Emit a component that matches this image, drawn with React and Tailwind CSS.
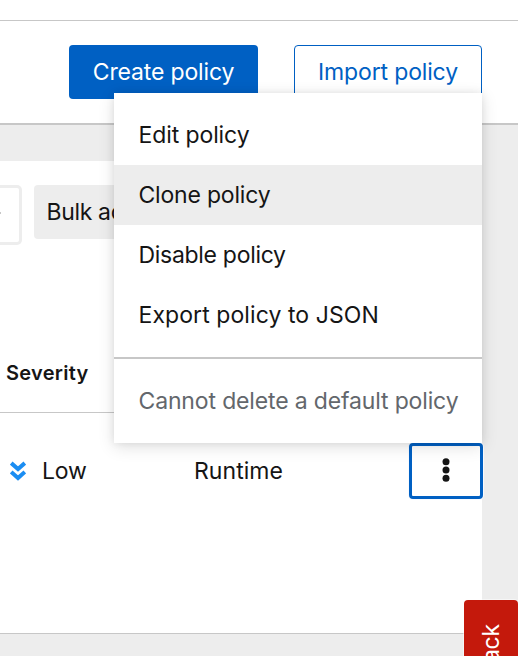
import React from "react";

const menuItems = [
  { label: "Edit policy", spacing: "tracking-[-0.1px]" },
  { label: "Clone policy", active: true, spacing: "tracking-[-0.2px]" },
  { label: "Disable policy", spacing: "tracking-[-0.3px]" },
  { label: "Export policy to JSON", spacing: "tracking-[0.08px]" },
];

function SeverityLowIcon() {
  return (
    <svg width="16" height="20" viewBox="0 0 16 20" fill="none" stroke="#1b8df2" strokeWidth="4" className="shrink-0">
      <path d="M1.2 2.1 8 8.1 14.8 2.1M1.2 11 8 17 14.8 11" strokeLinejoin="miter" />
    </svg>
  );
}

function ActionsMenu() {
  return (
    <div className="absolute left-[114px] top-[93px] z-20 h-[350px] w-[368px] bg-white py-3 shadow-[0_4px_16px_rgba(3,3,3,0.12),0_0_8px_rgba(3,3,3,0.08)]">
      {menuItems.map((item) => (
        <div
          key={item.label}
          className={`flex h-[60px] items-center whitespace-nowrap pl-[24.5px] ${item.spacing} ${item.active ? "bg-[#ededed]" : ""}`}
        >
          <span>{item.label}</span>
        </div>
      ))}
      <div className="my-3 h-[2px] bg-[#c7c7c7]" />
      <div className="flex h-[60px] items-center whitespace-nowrap pl-[24.5px] tracking-[-0.15px] text-[#63676c]">
        <span>Cannot delete a default policy</span>
      </div>
    </div>
  );
}

export default function App() {
  return (
    <div className="relative flex h-[656px] w-[518px] flex-col overflow-hidden bg-[#ededed] font-['Inter',sans-serif] text-[23px] leading-9 text-[#151515]">
      <header className="h-[125px] shrink-0 border-b-2 border-[#c7c7c7] bg-white">
        <div className="h-[21px] border-b border-[#c7c7c7]" />
        <div className="mt-6 flex gap-9 pl-[69px]">
          <button className="h-[54px] w-[189px] whitespace-nowrap rounded-[4px] bg-[#0060c3] tracking-[-0.15px] text-white">Create policy</button>
          <button className="h-[54px] w-[188px] whitespace-nowrap rounded-[4px] border border-[#0060c3] tracking-[-0.15px] text-[#0060c3]">Import policy</button>
        </div>
      </header>

      <main className="mt-9 h-[472px] w-[482px] shrink-0 bg-white">
        <div className="flex gap-3 pt-6">
          <div className="flex h-[60px] w-[22px] items-center rounded-r-[5px] border-y-[3px] border-r-[3px] border-[#ededed]">
            <div className="mb-1 h-[2px] w-px bg-[#c7c7c7]" />
          </div>
          <button className="h-[54px] w-[180px] whitespace-nowrap rounded-[4px] bg-[#ededed] pl-[12.5px] text-left tracking-[-0.35px]">Bulk actions</button>
        </div>
        <div className="mt-[83px] flex h-[85px] items-center border-b border-[#c7c7c7] pl-1.5 pt-[5px] text-[20px] font-semibold tracking-[0.3px]">
          Severity
        </div>
        <div className="flex h-[116px] items-center pl-[10px]">
          <SeverityLowIcon />
          <span className="ml-4 w-[152px] shrink-0 tracking-[-0.2px]">Low</span>
          <span className="w-[215px] shrink-0 tracking-[0.05px]">Runtime</span>
          <button className="flex h-14 w-[74px] shrink-0 items-center justify-center rounded-[4px] border-[3px] border-[#0060c3] bg-white shadow-[0_0_0_1px_#f7faff]">
            <svg width="8" height="26" viewBox="0 0 8 26" fill="#151515">
              <circle cx="4" cy="3.7" r="3.5" />
              <circle cx="4" cy="11.9" r="3.5" />
              <circle cx="4" cy="20.2" r="3.5" />
            </svg>
          </button>
        </div>
      </main>
      <div className="h-px w-full shrink-0 bg-[#c7c7c7]" />

      <ActionsMenu />

      <div className="absolute left-[464px] top-[600px] z-30 flex h-[150px] w-[54px] justify-center rounded-[4px] bg-[#c4190c] pt-6 text-white shadow-[0_0_0_1px_rgba(255,255,255,0.5)]">
        <span className="rotate-180 whitespace-nowrap text-right tracking-[-0.2px] [writing-mode:vertical-rl]">Feedback</span>
      </div>
    </div>
  );
}
